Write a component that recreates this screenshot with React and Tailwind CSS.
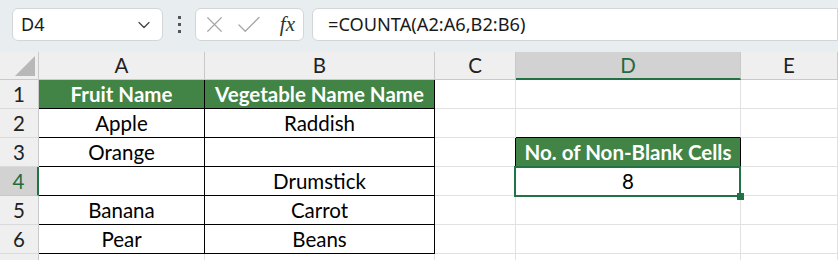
import { ChevronDown, X, Check } from "lucide-react";

const COLS = ["A", "B", "C", "D", "E"];

const ROWS = [
  { n: 1, cells: [{ t: "Fruit Name", head: true }, { t: "Vegetable Name Name", head: true }, {}, {}, {}] },
  { n: 2, cells: [{ t: "Apple" }, { t: "Raddish" }, {}, { topOf: true }, {}] },
  { n: 3, cells: [{ t: "Orange" }, {}, { leftOf: true }, { t: "No. of Non-Blank Cells", head: true, box: true }, {}] },
  { n: 4, cells: [{}, { t: "Drumstick" }, { leftOf: true }, { t: "8", selected: true }, {}] },
  { n: 5, cells: [{ t: "Banana" }, { t: "Carrot" }, {}, {}, {}] },
  { n: 6, cells: [{ t: "Pear" }, { t: "Beans" }, {}, {}, {}] },
  { n: 7, label: "", cells: [{}, {}, {}, {}, {}] },
];

function cellClass(c, col, rowN) {
  const inTable = (col === 0 || col === 1) && rowN >= 1 && rowN <= 6;
  let cls = "relative flex items-center justify-center border-r border-b ";
  if (inTable || c.box) {
    cls += "border-black ";
  } else if (c.topOf) {
    cls += "border-r-[#e1e1e1] border-b-black ";
  } else if (c.leftOf) {
    cls += "border-r-black border-b-[#e1e1e1] ";
  } else {
    cls += "border-[#e1e1e1] ";
  }
  if (c.selected) cls += "z-10 ";
  if (c.head) cls += "bg-[#418446] text-white font-bold ";
  else cls += "bg-white text-black ";
  return cls;
}

export default function App() {
  return (
    <div className="w-[838px] h-[260px] overflow-hidden bg-white" style={{ fontFamily: "Lato, 'Liberation Sans', sans-serif" }}>
      {/* Formula bar */}
      <div className="h-[52px] bg-[#e8edf0] flex items-start pt-2 pl-3">
        <div className="w-[151px] h-[33px] bg-white border border-[#d3d6d8] rounded-md flex items-center justify-between pl-2 pr-2">
          <span className="text-[18px] text-[#1a1a1a]" style={{ fontFamily: "'Noto Sans', sans-serif" }}>D4</span>
          <ChevronDown className="w-5 h-5 text-[#444]" strokeWidth={1.5} />
        </div>
        <div className="w-[32px] h-[33px] flex flex-col items-center justify-center gap-[4px]">
          <span className="w-[3px] h-[3px] bg-[#555]" />
          <span className="w-[3px] h-[3px] bg-[#555]" />
          <span className="w-[3px] h-[3px] bg-[#555]" />
        </div>
        <div className="w-[109px] h-[33px] bg-white border border-[#d3d6d8] rounded-md flex items-center pl-[5px] pr-2 gap-[6px]">
          <X className="w-[27px] h-[27px] text-[#a8a8a8]" strokeWidth={1.1} />
          <Check className="w-[30px] h-[30px] text-[#a8a8a8]" strokeWidth={1.1} />
          <span className="ml-auto text-[21px] italic text-[#333]" style={{ fontFamily: "'Liberation Serif', serif" }}>fx</span>
        </div>
        <div className="ml-2 flex-1 h-[33px] bg-white border border-[#d3d6d8] rounded-l-md flex items-center pl-[15px]">
          <span className="text-[18.2px] text-[#1a1a1a]" style={{ fontFamily: "'Noto Sans', sans-serif" }}>=COUNTA(A2:A6,B2:B6)</span>
        </div>
      </div>

      {/* Sheet grid */}
      <div className="grid grid-cols-[39px_166px_230px_81px_225px_97px] grid-rows-[28px_repeat(7,29px)] text-[20.5px]">
        <div className="relative bg-[#efefef] border-r border-b border-[#c9c9c9]">
          <div className="absolute right-[3px] bottom-[3px] w-0 h-0 border-l-[20px] border-l-transparent border-b-[20px] border-b-[#b8b8b8]" />
        </div>
        {COLS.map((c) => (
          <div
            key={c}
            className={
              c === "D"
                ? "flex items-center justify-center bg-[#d2d2d2] border-r border-[#c9c9c9] border-b-2 border-b-[#217346] text-[#1f6b3e]"
                : "flex items-center justify-center bg-[#efefef] border-r border-b border-[#c9c9c9] text-[#222]"
            }
          >
            {c}
          </div>
        ))}
        {ROWS.map((r) => (
          <>
            <div
              key={`h${r.n}`}
              className={
                r.n === 4
                  ? "flex items-center justify-center bg-[#d2d2d2] border-b border-b-[#c9c9c9] border-r-2 border-r-[#217346] text-[#1f6b3e]"
                  : "flex items-center justify-center bg-[#efefef] border-b border-r border-b-[#dadada] border-r-[#c9c9c9] text-[#222]"
              }
            >
              {r.label === "" ? null : r.n}
            </div>
            {r.cells.map((c, i) => (
              <div key={`${r.n}-${i}`} className={cellClass(c, i, r.n)}>
                {c.t}
                {c.selected && (
                  <div className="absolute -left-[2px] -top-px -right-px -bottom-[2px] border-2 border-[#217346]">
                    <div className="absolute -right-[5px] -bottom-[5px] w-[7px] h-[7px] bg-[#217346]" />
                  </div>
                )}
              </div>
            ))}
          </>
        ))}
      </div>
    </div>
  );
}
